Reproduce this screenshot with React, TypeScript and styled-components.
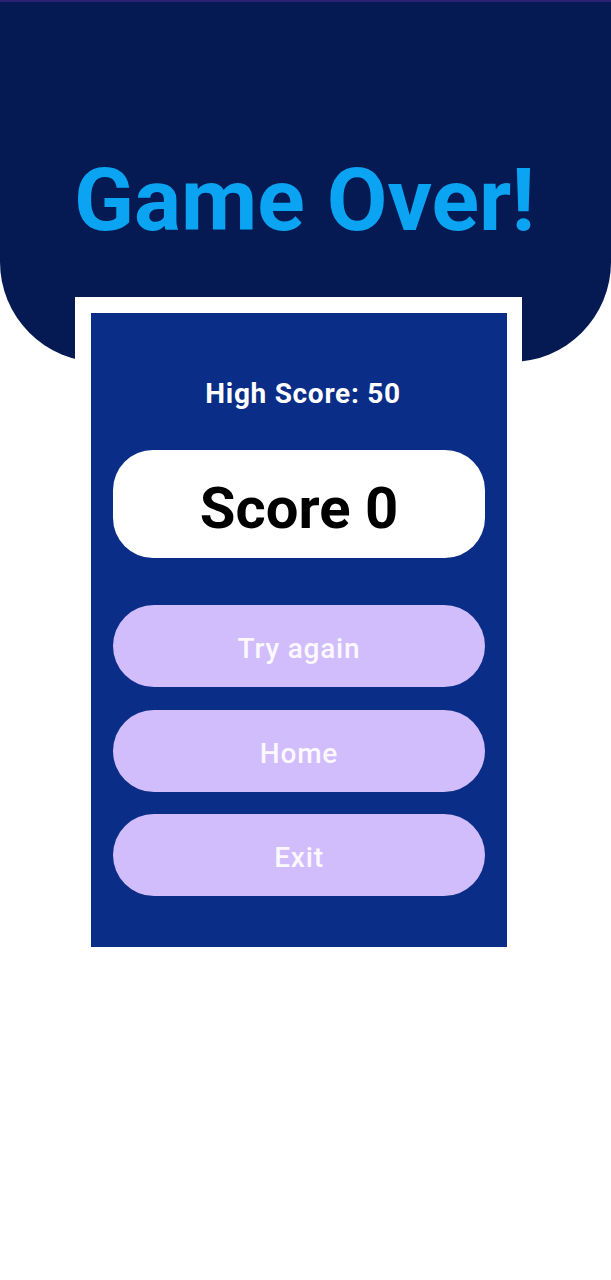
import React from "react";
import styled, { createGlobalStyle } from "styled-components";

const Global = createGlobalStyle`
  html, body { margin: 0; padding: 0; background: #ffffff; }
  body { font-family: Roboto, "Noto Sans", sans-serif; }
`;

const Page = styled.div`
  width: 611px;
  min-height: 1280px;
  background: #ffffff;
  display: flex;
  flex-direction: column;
`;

const Header = styled.header`
  box-sizing: border-box;
  height: 362px;
  background: #051a52;
  border-top: 2px solid #2b2276;
  border-bottom-left-radius: 100px;
  border-bottom-right-radius: 100px;
  display: flex;
  justify-content: center;
  padding-top: 154px;
`;

const Title = styled.h1`
  margin: 0 0 0 -2px;
  font-family: Roboto, sans-serif;
  font-weight: 700;
  font-size: 88px;
  line-height: 1;
  color: #0ba4f3;
`;

const Frame = styled.div`
  position: relative;
  align-self: flex-start;
  margin: -65px 0 0 75px;
  padding: 16px 15px 16px 16px;
  background: #ffffff;
`;

const Card = styled.section`
  box-sizing: border-box;
  width: 416px;
  height: 634px;
  background: #0a2d88;
  padding: 67px 22px 0;
  display: flex;
  flex-direction: column;
  align-items: stretch;
`;

const HighScore = styled.div`
  padding-left: 8px;
  font-weight: 700;
  font-size: 28px;
  letter-spacing: 0.7px;
  line-height: 1;
  color: #ffffff;
  text-align: center;
`;

const ScorePill = styled.div`
  box-sizing: border-box;
  margin-top: 42px;
  height: 108px;
  background: #ffffff;
  border-radius: 40px;
  display: flex;
  align-items: center;
  justify-content: center;
  padding-top: 8px;
  font-weight: 700;
  font-size: 58px;
  line-height: 1;
  color: #000000;
`;

const Buttons = styled.div`
  margin-top: 47px;
  display: flex;
  flex-direction: column;
  gap: 22.5px;
`;

const ActionButton = styled.button`
  height: 82px;
  border: none;
  border-radius: 41px;
  background: #d1bdfc;
  color: #fbf8ff;
  font-family: Roboto, sans-serif;
  font-weight: 500;
  font-size: 28px;
  letter-spacing: 0.8px;
  line-height: 1;
  padding: 6px 0 0;
  cursor: pointer;
`;

export default function App() {
  return (
    <>
      <Global />
      <Page>
        <Header>
          <Title>Game Over!</Title>
        </Header>
        <Frame>
          <Card>
            <HighScore>High Score: 50</HighScore>
            <ScorePill>Score 0</ScorePill>
            <Buttons>
              <ActionButton>Try again</ActionButton>
              <ActionButton>Home</ActionButton>
              <ActionButton>Exit</ActionButton>
            </Buttons>
          </Card>
        </Frame>
      </Page>
    </>
  );
}
